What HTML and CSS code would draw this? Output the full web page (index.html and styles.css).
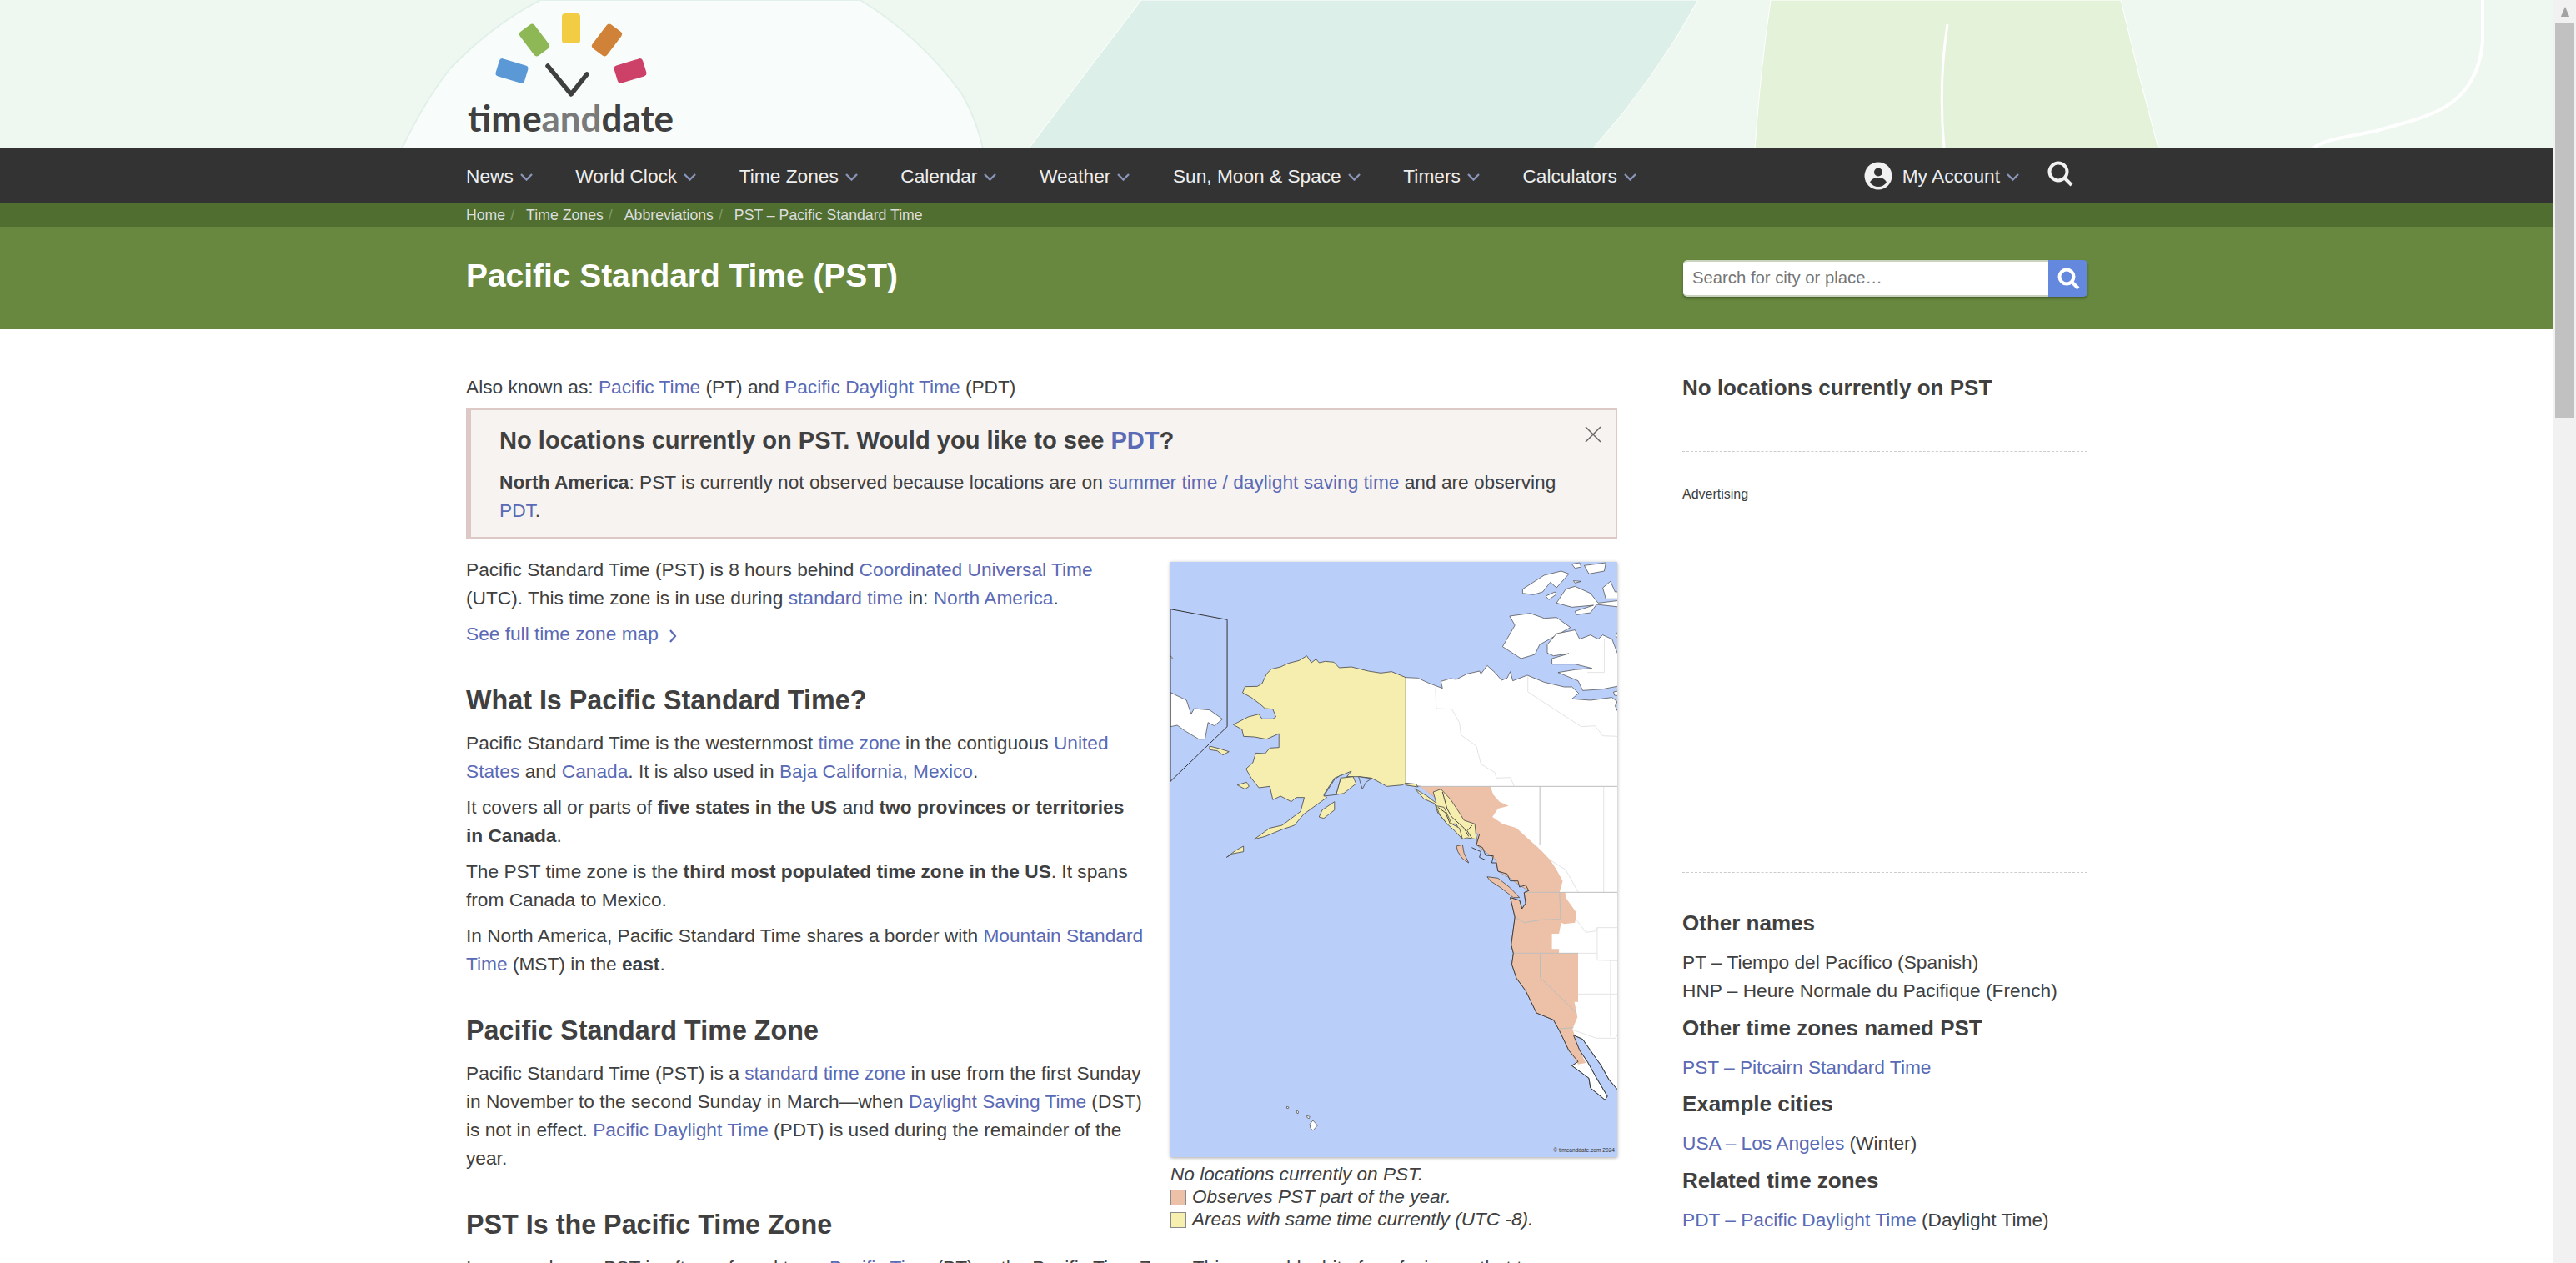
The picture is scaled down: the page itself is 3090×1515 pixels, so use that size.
FILE: index.html
```html
<!DOCTYPE html>
<html>
<head>
    <title>Pacific Standard Time (PST)</title>
    <link rel="stylesheet" href="styles.css">
</head>
<body>
    <div class="page">
        <header class="hero">
            <svg class="hero-art" viewBox="0 0 3063 178" width="3063" height="178">
                <path class="hero-dome" d="M482 178Q510 120 540 82Q590 30 648 0L1032 0Q1105 45 1154 113Q1172 145 1179 178Z"/>
                <path class="hero-teal" d="M1234 178Q1300 90 1369 0L2037 0Q1985 95 1911 178Z"/>
                <path class="hero-lime" d="M2105 178Q2112 80 2124 0L2544 0Q2565 90 2589 178Z"/>
                <path class="hero-line" d="M2336 29Q2325 100 2332 178"/>
                <path class="hero-line hero-curl" d="M2978 0L2978 50C2975 90 2955 115 2935 127C2905 145 2870 150 2851 157C2810 165 2785 168 2775 178"/>
                <rect x="674" y="16" width="22" height="36" rx="4" fill="#f2cc43"/>
                <rect x="630" y="30" width="22" height="36" rx="4" fill="#8db855" transform="rotate(-37 641 48)"/>
                <rect x="717" y="30" width="22" height="36" rx="4" fill="#d08238" transform="rotate(37 728 48)"/>
                <rect x="596" y="74" width="36" height="22" rx="4" fill="#5b99d6" transform="rotate(17 614 85)"/>
                <rect x="738" y="74" width="36" height="22" rx="4" fill="#cd4068" transform="rotate(-17 756 85)"/>
                <path class="logo-hand" d="M657 79L685 113L704 89"/>
                <text class="logo-text" x="561" y="158" textLength="247"><tspan>time</tspan><tspan class="logo-and">and</tspan><tspan>date</tspan></text>
            </svg>
        </header>

        <nav class="nav">
            <div class="wrap nav-row">
                <div class="nav-links">
                    <a class="nav-item">News<svg class="chev" viewBox="0 0 15 9"><path d="M1 1l6.500 6.500L14 1"/></svg></a>
                    <a class="nav-item">World Clock<svg class="chev" viewBox="0 0 15 9"><path d="M1 1l6.500 6.500L14 1"/></svg></a>
                    <a class="nav-item">Time Zones<svg class="chev" viewBox="0 0 15 9"><path d="M1 1l6.500 6.500L14 1"/></svg></a>
                    <a class="nav-item">Calendar<svg class="chev" viewBox="0 0 15 9"><path d="M1 1l6.500 6.500L14 1"/></svg></a>
                    <a class="nav-item">Weather<svg class="chev" viewBox="0 0 15 9"><path d="M1 1l6.500 6.500L14 1"/></svg></a>
                    <a class="nav-item">Sun, Moon &amp; Space<svg class="chev" viewBox="0 0 15 9"><path d="M1 1l6.500 6.500L14 1"/></svg></a>
                    <a class="nav-item">Timers<svg class="chev" viewBox="0 0 15 9"><path d="M1 1l6.500 6.500L14 1"/></svg></a>
                    <a class="nav-item">Calculators<svg class="chev" viewBox="0 0 15 9"><path d="M1 1l6.500 6.500L14 1"/></svg></a>
                </div>
                <div class="nav-right">
                    <a class="nav-item account"><svg class="user-icon" viewBox="0 0 34 34"><circle cx="17" cy="17" r="16.500" fill="#f1f1f1"/><circle cx="17" cy="12.500" r="5" fill="#333"/><path d="M7 25c2-5 6-6 10-6s8 1 10 6c-2.500 3-6 5-10 5s-7.500-2-10-5z" fill="#333"/></svg><span>My Account</span><svg class="chev" viewBox="0 0 15 9"><path d="M1 1l6.500 6.500L14 1"/></svg></a>
                    <svg class="search-icon" viewBox="0 0 32 32"><circle cx="13" cy="13" r="10.500"/><path d="M20.500 20.500L29 29"/></svg>
                </div>
            </div>
        </nav>

        <div class="crumbs">
            <div class="wrap crumb-row">
                <a>Home</a><span class="sep">/</span>
                <a>Time Zones</a><span class="sep">/</span>
                <a>Abbreviations</a><span class="sep">/</span>
                <a>PST – Pacific Standard Time</a>
            </div>
        </div>

        <div class="band">
            <div class="wrap band-row">
                <h1>Pacific Standard Time (PST)</h1>
                <form class="search">
                    <input type="text" placeholder="Search for city or place…">
                    <button type="button"><svg viewBox="0 0 28 28"><circle cx="12" cy="12" r="8.500"/><path d="M18 18l8 8"/></svg></button>
                </form>
            </div>
        </div>

        <div class="wrap content">
            <main class="main">
                <p>Also known as: <a>Pacific Time</a> (PT) and <a>Pacific Daylight Time</a> (PDT)</p>

                <div class="alert">
                    <svg class="alert-close" viewBox="0 0 20 20"><path d="M1 1l18 18M19 1L1 19"/></svg>
                    <h2 class="alert-title">No locations currently on PST. Would you like to see <a>PDT</a>?</h2>
                    <p><b>North America</b>: PST is currently not observed because locations are on <a>summer time / daylight saving time</a> and are observing <a>PDT</a>.</p>
                </div>

                <figure class="map-box">
                    <div class="map-frame">
                        <svg class="map" viewBox="38 42 1449 2142" preserveAspectRatio="none" width="536" height="714">
                            <!-- coordinates traced at 3x, stretched to the box -->
                            <g class="land">
                                <polygon points="38,512 90,540 105,590 115,570 165,575 207,608 180,632 160,620 150,680 130,680 85,650 60,630 38,635"/>
                                <polygon points="38,380 45,388 38,392"/>
                                <polygon points="1138,237 1205,227 1250,245 1290,242 1335,278 1235,340 1220,375 1175,390 1115,347 1155,270"/>
                                <polygon points="1260,340 1290,300 1350,287 1365,320 1400,305 1425,320 1440,305 1470,320 1487,370 1500,370 1500,487 1440,500 1375,505 1360,470 1295,440 1350,430 1405,425 1350,410 1275,410 1275,390 1330,372 1280,380 1260,370"/>
                                <polygon points="1180,140 1250,90 1305,75 1330,85 1290,135 1270,115 1245,150 1215,160 1180,155"/>
                                <polygon points="1255,165 1285,150 1290,158 1265,178"/>
                                <polygon points="1290,190 1320,140 1350,130 1400,155 1425,190 1500,180 1500,205 1420,195 1400,225 1355,232 1350,220 1410,198 1340,205"/>
                                <polygon points="1380,55 1450,45 1445,75 1395,85"/>
                                <polygon points="1340,50 1365,45 1370,60 1350,65"/>
                                <polygon points="1345,110 1370,112 1350,118"/>
                                <polygon points="1440,135 1465,112 1480,150 1500,150 1500,175 1450,175"/>
                                <polygon points="1490,290 1500,290 1500,320 1482,310"/>
                                <polygon points="1475,510 1500,505 1500,525 1478,522"/>
                                <polygon points="490,2065 500,2052 515,2070 500,2088 492,2080"/>
                                <polygon points="480,2035 490,2038 488,2045 482,2043"/>
                                <polygon points="447,2016 453,2020 452,2027 447,2025"/>
                                <polygon points="415,2002 422,2004 420,2009 415,2008"/>
                                <polygon points="801,458 840,460 875,478 920,497 915,472 945,462 965,465 1000,445 1040,435 1045,445 1065,415 1090,440 1112,468 1130,460 1140,437 1148,470 1195,450 1250,475 1315,492 1340,492 1362,515 1340,535 1400,540 1470,530 1487,545 1480,560 1487,578 1500,578 1500,1950 1487,1940 1460,1905 1435,1855 1400,1800 1375,1760 1345,1745 1365,1800 1390,1840 1420,1900 1455,1965 1447,1978 1400,1935 1395,1900 1340,1855 1360,1840 1330,1800 1300,1730 1280,1690 1225,1665 1190,1585 1160,1540 1145,1490 1150,1450 1143,1420 1155,1320 1140,1250 1170,1260 1178,1290 1190,1270 1185,1232 1200,1225 1170,1205 1140,1180 1100,1155 1095,1115 1060,1085 1030,1060 1035,1020 985,970 940,890 910,900 850,850 801,845"/>
                            </g>

                            <polygon class="pst" points="845,850 1075,850 1085,880 1105,905 1135,920 1100,930 1082,960 1115,985 1160,1000 1200,1040 1240,1080 1270,1115 1290,1150 1310,1190 1300,1230 1318,1230 1320,1250 1355,1305 1350,1340 1315,1345 1305,1340 1298,1380 1275,1380 1275,1435 1298,1435 1298,1450 1360,1450 1360,1625 1348,1625 1358,1680 1342,1722 1365,1800 1385,1845 1360,1850 1330,1800 1300,1730 1280,1690 1225,1665 1190,1585 1160,1540 1145,1490 1150,1450 1143,1420 1155,1320 1140,1250 1170,1260 1178,1290 1190,1270 1185,1232 1200,1225 1170,1205 1140,1180 1100,1155 1095,1115 1060,1085 1030,1060 1035,1020 985,970 940,890 910,900"/>

                            <g class="faint">
                                <polyline points="897,497 900,570 950,572 975,620 980,665 1030,705 1045,770 1090,800 1095,820 1140,818 1153,850"/>
                                <polyline points="1197,455 1197,510 1370,635 1415,632 1440,668 1487,670"/>
                                <polyline points="1445,320 1445,440 1390,440"/>
                                <polyline points="1443,850 1443,1231"/>
                                <polyline points="1270,1115 1320,1150 1360,1230"/>
                                <polyline points="1355,1330 1385,1375 1420,1370 1422,1358 1487,1358"/>
                                <polyline points="1422,1358 1422,1475 1487,1477"/>
                                <polyline points="1360,1450 1422,1450"/>
                                <polyline points="1465,1477 1465,1750"/>
                                <polyline points="1360,1597 1487,1597"/>
                                <polyline points="1340,1725 1420,1756 1480,1756 1487,1745"/>
                            </g>
                            <g class="border">
                                <polyline points="845,850 1487,850"/>
                                <polyline points="1236,850 1236,1060"/>
                                <polyline points="1185,1231 1487,1231"/>
                                <polyline points="1155,1320 1185,1340 1240,1330 1305,1328"/>
                                <polyline points="1300,1232 1303,1328"/>
                                <polyline points="1150,1450 1360,1450"/>
                                <polyline points="1237,1450 1237,1538 1355,1665"/>
                                <polyline points="1297,1722 1345,1718"/>
                            </g>

                            <g class="alaska">
                                <polygon points="801,458 755,437 720,442 680,435 625,420 585,423 568,403 540,400 520,405 510,392 495,405 480,380 455,397 420,407 395,420 365,428 350,445 335,480 320,490 280,491 272,513 300,530 330,555 345,570 370,572 380,600 370,607 335,607 325,590 290,600 242,628 270,645 275,670 310,672 350,680 390,660 390,710 360,712 345,732 315,730 305,765 283,787 300,820 325,855 360,850 370,898 395,885 430,905 445,890 472,890 460,940 430,965 400,990 360,1000 310,1040 345,1030 400,1005 440,990 470,950 545,890 535,880 570,820 625,795 610,815 650,815 690,820 740,850 790,845 801,838 835,842 840,852 801,845"/>
                                <polygon points="830,858 870,885 900,910 890,870 915,860 945,895 975,945 990,972 1025,985 1030,1040 1000,1035 985,1040 965,985 935,985 905,945 895,912 860,895"/>
                                <polygon points="900,920 925,925 950,985 975,1000 985,1040 960,1010 935,985 910,950"/>
                                <polygon points="165,705 200,715 228,725 208,737 190,722 165,718"/>
                                <polygon points="255,845 285,835 293,850 280,860"/>
                                <polygon points="520,960 530,935 570,905 570,935 535,965"/>
                                <polygon points="220,1105 250,1080 275,1065 275,1085 240,1092"/>
                                <polygon points="575,880 590,820 630,815 640,840 600,875"/>
                            </g>
                            <path class="sea" d="M575 880L535 885L570 825L592 808L590 820Z"/>
                            <path class="sea" d="M648 815L690 822L672 835L660 860Z"/>

                            <g class="coast">
                                <polyline points="1487,1940 1460,1905 1435,1855 1400,1800 1375,1760 1345,1745 1365,1800 1390,1840 1420,1900 1455,1965 1447,1978 1400,1935 1395,1900 1340,1855 1360,1840 1330,1800 1300,1730 1280,1690 1225,1665 1190,1585 1160,1540 1145,1490 1150,1450 1143,1420 1155,1320 1140,1250 1170,1260 1178,1290 1190,1270 1185,1232 1200,1225 1190,1205 1170,1212 1165,1190 1140,1190 1130,1165 1100,1155 1095,1125 1080,1125 1085,1100 1060,1098 1050,1070 1030,1060 1040,1022"/>
                                <polyline points="920,870 935,930 950,960 990,1000 1005,1030"/>
                                <polyline points="905,925 930,945 945,985"/>
                                <polyline points="1016,990 1000,1010 1015,1035"/>
                                <polyline points="1015,1070 1045,1085 1040,1105 1060,1115"/>
                            </g>
                            <polygon class="isle" points="965,1065 985,1060 990,1090 1005,1125 985,1110 970,1085"/>
                            <polygon class="isle" points="1065,1175 1100,1180 1140,1215 1170,1250 1150,1250 1110,1215 1075,1190"/>
                            <polygon class="inset" points="38,212 222,250 222,635 38,832"/>
                        </svg>
                        <span class="map-copy">© timeanddate.com 2024</span>
                    </div>
                    <figcaption>
                        <div>No locations currently on PST.</div>
                        <div class="key"><span class="swatch swatch-pst"></span>Observes PST part of the year.</div>
                        <div class="key"><span class="swatch swatch-same"></span>Areas with same time currently (UTC -8).</div>
                    </figcaption>
                </figure>

                <p>Pacific Standard Time (PST) is 8 hours behind <a>Coordinated Universal Time</a> (UTC). This time zone is in use during <a>standard time</a> in: <a>North America</a>.</p>
                <p><a>See full time zone map</a> <svg class="more" viewBox="0 0 10 16"><path d="M2 1l6 7-6 7"/></svg></p>

                <h2>What Is Pacific Standard Time?</h2>
                <p>Pacific Standard Time is the westernmost <a>time zone</a> in the contiguous <a>United States</a> and <a>Canada</a>. It is also used in <a>Baja California, Mexico</a>.</p>
                <p>It covers all or parts of <b>five states in the US</b> and <b>two provinces or territories in Canada</b>.</p>
                <p>The PST time zone is the <b>third most populated time zone in the US</b>. It spans from Canada to Mexico.</p>
                <p>In North America, Pacific Standard Time shares a border with <a>Mountain Standard Time</a> (MST) in the <b>east</b>.</p>

                <h2>Pacific Standard Time Zone</h2>
                <p>Pacific Standard Time (PST) is a <a>standard time zone</a> in use from the first Sunday in November to the second Sunday in March—when <a>Daylight Saving Time</a> (DST) is not in effect. <a>Pacific Daylight Time</a> (PDT) is used during the remainder of the year.</p>

                <h2>PST Is the Pacific Time Zone</h2>
                <p>In many places, PST is often referred to as <a>Pacific Time</a> (PT) or the Pacific Time Zone. This can add a bit of confusion as that term</p>
            </main>

            <aside class="side">
                <div class="side-now">
                    <h3>No locations currently on PST</h3>
                </div>
                <div class="side-ad">Advertising</div>
                <div class="side-facts">
                    <h3>Other names</h3>
                    <p>PT – Tiempo del Pacífico (Spanish)<br>HNP – Heure Normale du Pacifique (French)</p>
                    <h3>Other time zones named PST</h3>
                    <p><a>PST – Pitcairn Standard Time</a></p>
                    <h3>Example cities</h3>
                    <p><a>USA – Los Angeles</a> (Winter)</p>
                    <h3>Related time zones</h3>
                    <p><a>PDT – Pacific Daylight Time</a> (Daylight Time)</p>
                </div>
            </aside>
        </div>
    </div>

    <div class="scrollbar">
        <div class="scroll-up"><svg viewBox="0 0 14 16"><path d="M7 1l6 14H1z"/></svg></div>
        <div class="scroll-thumb"></div>
    </div>
</body>
</html>
```

FILE: styles.css
```css
html, body {
    height: 1515px;
    overflow: hidden;
}

body {
    display: flex;
    margin: 0;
    font-family: "Liberation Sans", Arial, sans-serif;
    font-size: 22.7px;
    line-height: 34px;
    color: #404040;
    background: #fff;
}

a {
    color: #5a6ab5;
}

.page {
    width: 3063px;
    height: 1515px;
    overflow: hidden;
}

.wrap {
    width: 1945px;
    margin: 0 auto;
}

/* hero */
.hero {
    height: 178px;
    background: #eef8f0;
}

.hero-art {
    display: block;
}

.hero-dome {
    fill: #f8fdfb;
    stroke: #e2f0ea;
    stroke-width: 2;
}

.hero-teal {
    fill: #dcefe8;
    stroke: #fff;
    stroke-width: 1;
}

.hero-lime {
    fill: #e5f2da;
    stroke: #fff;
    stroke-width: 1;
}

.hero-line {
    fill: none;
    stroke: #fff;
    stroke-width: 3;
}

.hero-curl {
    stroke-width: 4;
}

.logo-hand {
    fill: none;
    stroke: #3f3f3f;
    stroke-width: 5.5;
    stroke-linecap: round;
    stroke-linejoin: round;
}

.logo-text {
    font-family: "Lato", sans-serif;
    font-size: 44px;
    font-weight: 700;
    fill: #404040;
}

.logo-and {
    fill: #7a7a7a;
}

/* nav */
.nav {
    height: 65px;
    background: #333;
}

.nav-row {
    display: flex;
    justify-content: space-between;
    align-items: center;
    height: 65px;
}

.nav-links {
    display: flex;
    gap: 51.6px;
}

.nav-item {
    display: flex;
    align-items: center;
    gap: 8px;
    padding-top: 1px;
    color: #eee;
}

.chev {
    width: 15px;
    height: 9px;
    margin-top: 2px;
    fill: none;
    stroke: #8a94b8;
    stroke-width: 2.4;
}

.nav-right {
    display: flex;
    align-items: center;
    gap: 34px;
    padding-right: 16px;
}

.user-icon {
    width: 34px;
    height: 34px;
    margin-right: 4px;
}

.search-icon {
    width: 32px;
    height: 32px;
    margin-top: -4px;
    fill: none;
    stroke: #f1f1f1;
    stroke-width: 4;
}

/* breadcrumb */
.crumbs {
    height: 29px;
    background: #4f6e2f;
}

.crumb-row {
    display: flex;
    align-items: center;
    height: 29px;
    font-size: 17.7px;
}

.crumb-row a {
    color: #ddd;
}

.sep {
    margin: 0 14px 0 6px;
    color: #7f9a63;
}

/* title band */
.band {
    height: 123px;
    background: #67883e;
}

.band-row {
    display: flex;
    justify-content: space-between;
    align-items: center;
    height: 123px;
}

h1 {
    margin: 0 0 6px;
    font-size: 38.9px;
    line-height: 46px;
    color: #fff;
}

.search {
    display: flex;
    width: 485px;
    height: 44px;
    border-radius: 5px;
    box-shadow: 0 2px 3px rgba(0, 0, 0, .3);
}

.search input {
    flex: 1;
    min-width: 0;
    box-sizing: border-box;
    padding: 0 11px;
    border: 0;
    border-top: 2px solid #c9d3bd;
    border-bottom: 2px solid #c9d3bd;
    border-radius: 5px 0 0 5px;
    font-family: inherit;
    font-size: 20.3px;
    color: #404040;
    background: #fff;
    outline: 0;
}

.search button {
    width: 47px;
    padding: 0;
    border: 0;
    border-radius: 0 5px 5px 0;
    background: #6488dd;
}

.search svg {
    display: block;
    width: 28px;
    height: 28px;
    margin: 0 auto;
    fill: none;
    stroke: #fff;
    stroke-width: 4;
}

/* content */
.content {
    display: flex;
    justify-content: space-between;
}

.main {
    width: 1381px;
    padding-top: 52px;
}

p {
    margin: 0 0 9px;
}

h2 {
    margin: 44px 0 15px;
    font-size: 32.3px;
    line-height: 38px;
}

.alert {
    position: relative;
    margin-bottom: 20px;
    padding: 14px 60px 15px 34px;
    border: 2px solid #dcc9c6;
    border-left-width: 6px;
    background: #f7f3f1;
}

.alert p {
    margin: 0;
}

.alert-title {
    margin: 0 0 11px;
    font-size: 29.1px;
    line-height: 44px;
}

.alert-close {
    position: absolute;
    top: 19px;
    right: 17px;
    width: 20px;
    height: 20px;
    fill: none;
    stroke: #666;
    stroke-width: 1.5;
}

.map-box {
    float: right;
    width: 536px;
    margin: 8px 0 0 31px;
}

.map-frame {
    position: relative;
    height: 714px;
    box-shadow: 0 1px 4px rgba(0, 0, 0, .35);
}

.map {
    display: block;
    background: #bacefa;
}

.map * {
    vector-effect: non-scaling-stroke;
}

.land polygon {
    fill: #fff;
    stroke: #444;
    stroke-width: .7;
}

.pst {
    fill: #ecc1a8;
}

.faint polyline {
    fill: none;
    stroke: #e4e4e4;
    stroke-width: 1;
}

.border polyline {
    fill: none;
    stroke: #bdbdbd;
    stroke-width: 1;
}

.alaska polygon {
    fill: #f6eeae;
    stroke: #444;
    stroke-width: .8;
}

.sea {
    fill: #bacefa;
    stroke: #444;
    stroke-width: .8;
}

.coast polyline {
    fill: none;
    stroke: #333;
    stroke-width: .9;
}

.isle {
    fill: #ecc1a8;
    stroke: #444;
    stroke-width: .8;
}

.inset {
    fill: none;
    stroke: #333;
    stroke-width: 1;
}

.map-copy {
    position: absolute;
    right: 3px;
    bottom: 4px;
    font-size: 6.6px;
    line-height: 1;
    color: #333;
}

figcaption {
    margin-top: 7px;
    font-size: 22.6px;
    font-style: italic;
    line-height: 27px;
}

.key {
    display: flex;
    align-items: center;
}

.swatch {
    box-sizing: border-box;
    width: 19px;
    height: 19px;
    margin: 2px 7px 0 0;
    border: 1px solid #8a8a8a;
}

.swatch-pst {
    background: #ecc1a8;
}

.swatch-same {
    background: #f6efae;
}

.more {
    width: 10px;
    height: 16px;
    margin-left: 6px;
    vertical-align: -3px;
    fill: none;
    stroke: #5a6ab5;
    stroke-width: 2.2;
}

/* sidebar */
.side {
    width: 486px;
    padding-top: 51px;
}

h3 {
    margin: 0 0 14px;
    font-size: 26px;
    line-height: 31px;
}

.side-now {
    height: 91px;
    border-bottom: 1px dashed #ccc;
}

.side-now h3 {
    margin: 4px 0 0;
}

.side-ad {
    box-sizing: border-box;
    height: 505px;
    padding-top: 39px;
    border-bottom: 1px dashed #ccc;
    font-size: 16px;
    line-height: 24px;
}

.side-facts {
    padding-top: 45px;
}

.side-facts p {
    margin-bottom: 12.6px;
}

/* scrollbar */
.scrollbar {
    display: flex;
    flex-direction: column;
    align-items: center;
    width: 27px;
    height: 1515px;
    background: #f1f1f1;
}

.scroll-up {
    display: flex;
    align-items: center;
    justify-content: center;
    height: 27px;
}

.scroll-up svg {
    width: 12px;
    height: 14px;
    fill: #a3a3a3;
}

.scroll-thumb {
    width: 23px;
    height: 474px;
    background: #c1c1c1;
}
```
